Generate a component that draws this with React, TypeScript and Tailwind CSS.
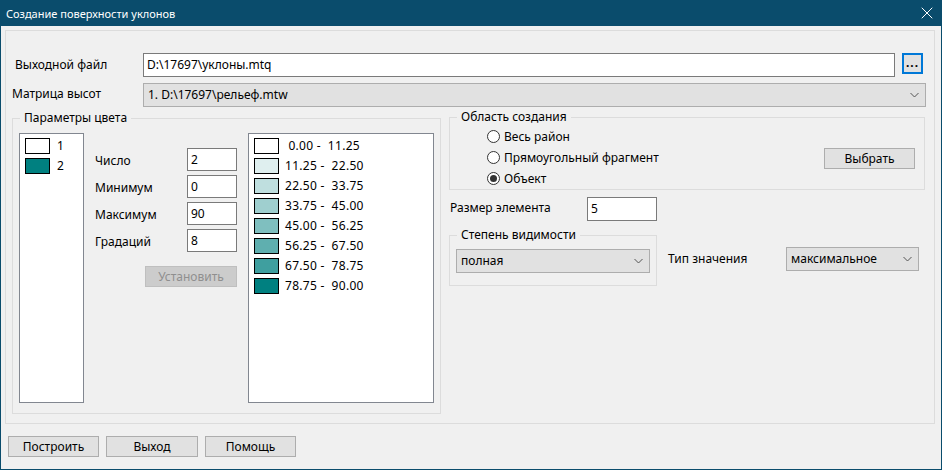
import { X } from 'lucide-react'

const grades = [
  { color: '#ffffff', text: ' 0.00 -  11.25' },
  { color: '#dfefef', text: '11.25 -  22.50' },
  { color: '#bfdfdf', text: '22.50 -  33.75' },
  { color: '#9fcfcf', text: '33.75 -  45.00' },
  { color: '#7fbfbf', text: '45.00 -  56.25' },
  { color: '#5fafaf', text: '56.25 -  67.50' },
  { color: '#3f9f9f', text: '67.50 -  78.75' },
  { color: '#008080', text: '78.75 -  90.00' },
]

function Chevron() {
  return (
    <svg width="9" height="6" viewBox="0 0 9 6" className="shrink-0">
      <path d="M0.5 1 L4.5 5 L8.5 1" fill="none" stroke="#555" strokeWidth="1" />
    </svg>
  )
}

function Combo({ value, className }: { value: string; className: string }) {
  return (
    <div
      className={`flex items-center justify-between h-[24px] pl-[4px] pr-[6px] bg-[#e1e1e1] border border-[#adadad] ${className}`}
    >
      <span>{value}</span>
      <Chevron />
    </div>
  )
}

function Field({ value, className }: { value: string; className: string }) {
  return (
    <div className={`flex items-center pl-[3px] bg-white border border-[#7a7a7a] ${className}`}>
      {value}
    </div>
  )
}

function Btn({ label, className }: { label: string; className: string }) {
  return (
    <div
      className={`flex items-center justify-center h-[21px] bg-[#e1e1e1] border border-[#adadad] ${className}`}
    >
      {label}
    </div>
  )
}

function Radio({ label, checked }: { label: string; checked?: boolean }) {
  return (
    <div className="flex items-center h-[21px]">
      <span className="flex items-center justify-center w-[13px] h-[13px] rounded-full border border-[#333] bg-white">
        {checked && <span className="w-[7px] h-[7px] rounded-full bg-[#333]" />}
      </span>
      <span className="ml-[4px]">{label}</span>
    </div>
  )
}

function Group({ title, className, children }: { title: string; className: string; children: React.ReactNode }) {
  return (
    <div className={`relative border border-[#dcdcdc] ${className}`}>
      <span className="absolute -top-[9px] left-[7px] px-[4px] leading-[16px] bg-[#f0f0f0]">{title}</span>
      {children}
    </div>
  )
}

export default function App() {
  return (
    <div className="w-[942px] h-[470px] flex flex-col bg-[#f0f0f0] border-x border-b border-[#0a4c6c] text-[12px] text-black font-['Noto_Sans',sans-serif] leading-none">
      <div className="h-[26px] shrink-0 flex items-center justify-between bg-[#0a4c6c] pl-[5px] pr-[4px] text-white">
        <span className="text-[11px]">Создание поверхности уклонов</span>
        <X size={20} strokeWidth={1.2} className="text-white" />
      </div>

      <div className="ml-[4px] mt-[4px] w-[930px] h-[394px] flex flex-col border border-[#dcdcdc] pt-[22px]">
        <div className="flex items-start h-[24px]">
          <span className="ml-[9px] w-[128px] h-[24px] flex items-center">Выходной файл</span>
          <Field value="D:\17697\уклоны.mtq" className="w-[752px] h-[24px]" />
          <div className="ml-[7px] w-[21px] h-[21px] flex items-end justify-center pb-[3px] bg-[#e1e1e1] border-2 border-[#0078d7] font-bold tracking-[1px]">
            ...
          </div>
        </div>

        <div className="flex items-center mt-[6px]">
          <span className="ml-[6px] w-[131px] -mt-[2px]">Матрица высот</span>
          <Combo value="1. D:\17697\рельеф.mtw" className="w-[783px]" />
        </div>

        <div className="flex items-start mt-[10px] ml-[6px]">
          <Group title="Параметры цвета" className="mt-[1px] w-[429px] h-[296px] flex items-start pt-[14px] pl-[6px]">
            <div className="w-[65px] h-[270px] bg-white border border-[#828790] pt-[4px] pl-[5px] flex flex-col gap-[4px]">
              {['#ffffff', '#008080'].map((c, i) => (
                <div key={c} className="flex items-center h-[16px]">
                  <span className="w-[25px] h-[16px] border border-black" style={{ backgroundColor: c }} />
                  <span className="ml-[7px]">{i + 1}</span>
                </div>
              ))}
            </div>

            <div className="w-[164px] px-[11px] pt-[15px] flex flex-col">
              {[
                ['Число', '2'],
                ['Минимум', '0'],
                ['Максимум', '90'],
                ['Градаций', '8'],
              ].map(([l, v], i) => (
                <div key={l} className={`flex items-center ${i ? 'mt-[4px]' : ''}`}>
                  <span className="w-[92px] pt-[3px]">{l}</span>
                  <Field value={v} className="w-[50px] h-[23px]" />
                </div>
              ))}
              <div className="flex justify-end mt-[14px]">
                <div className="w-[92px] h-[21px] flex items-center justify-center bg-[#cccccc] border border-[#bfbfbf] text-[#8f8f8f]">
                  Установить
                </div>
              </div>
            </div>

            <div className="w-[186px] h-[270px] bg-white border border-[#828790] pt-[4px] pl-[5px] flex flex-col gap-[4px]">
              {grades.map((g) => (
                <div key={g.text} className="flex items-center h-[16px]">
                  <span className="w-[25px] h-[16px] border border-black" style={{ backgroundColor: g.color }} />
                  <span className="ml-[6px] whitespace-pre tracking-[0.3px]">{g.text}</span>
                </div>
              ))}
            </div>
          </Group>

          <div className="ml-[8px] w-[476px] flex flex-col">
            <Group title="Область создания" className="h-[73px] flex items-start justify-between pt-[8px] pl-[37px] pr-[9px]">
              <div className="flex flex-col">
                <Radio label="Весь район" />
                <Radio label="Прямоугольный фрагмент" />
                <Radio label="Объект" checked />
              </div>
              <Btn label="Выбрать" className="w-[91px] mt-[22px]" />
            </Group>

            <div className="flex items-center mt-[7px]">
              <span className="ml-[1px] w-[137px] -mt-[2px]">Размер элемента</span>
              <Field value="5" className="w-[70px] h-[24px]" />
            </div>

            <div className="flex items-start mt-[14px]">
              <Group title="Степень видимости" className="w-[208px] h-[51px] pt-[13px] pl-[6px]">
                <Combo value="полная" className="w-[194px]" />
              </Group>
              <div className="flex items-center mt-[12px] ml-[11px]">
                <span className="w-[118px]">Тип значения</span>
                <Combo value="максимальное" className="w-[133px]" />
              </div>
            </div>
          </div>
        </div>
      </div>

      <div className="flex mt-[12px] ml-[7px] gap-[7px]">
        <Btn label="Построить" className="w-[91px]" />
        <Btn label="Выход" className="w-[92px]" />
        <Btn label="Помощь" className="w-[91px]" />
      </div>
    </div>
  )
}
